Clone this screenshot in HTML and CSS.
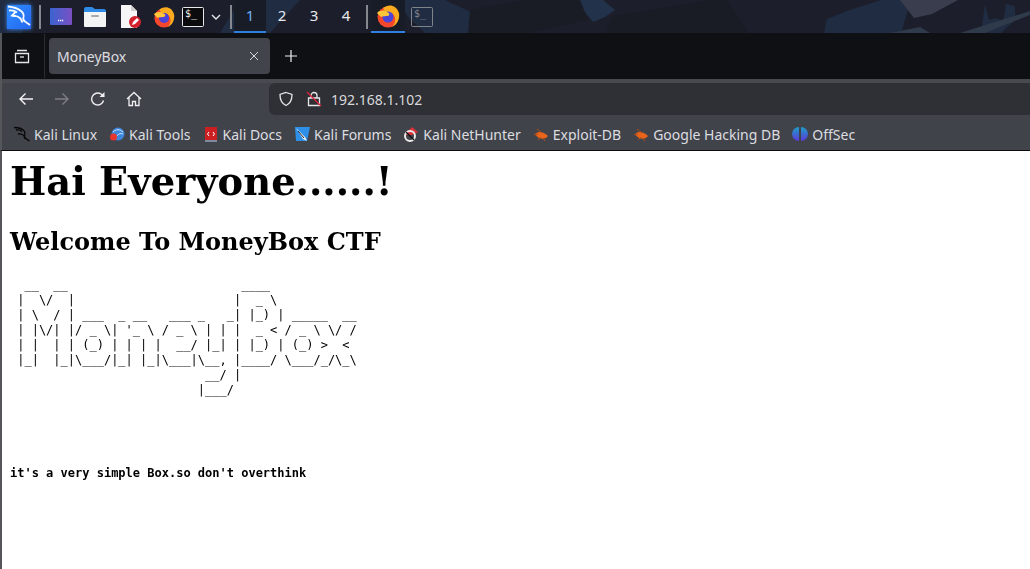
FILE: index.html
```
<!DOCTYPE html>
<html lang="en">
<head>
<meta charset="utf-8">
<title>MoneyBox</title>
<link rel="stylesheet" href="styles.css">
</head>
<body>
<header class="taskbar">
  <svg class="wallpaper" viewBox="0 0 1030 33" preserveAspectRatio="none" aria-hidden="true">
    <path class="wp-blue" d="M0 0h30l-8 33H0zM240 0h60l-30 33h-50zM395 0h50l30 14 10 19h-60l-15-14z"/>
    <path class="wp-line" d="M575 0h28l12 10-10 7-12 5z"/>
    <path class="wp-dark" d="M470 10l55-10h55l8 20-60 13h-60zM612 16l100-16h15l22 33H606z"/>
    <path class="wp-blue" d="M824 33l3-14 20-8 34-11h30l-10 33z"/>
    <path class="wp-light" d="M900 0h58l-26 14-18 4z"/>
    <path class="wp-blue" d="M985 4l4 16 8-2 6 4 3-18 9 2v14l-14 13h-20z"/>
    <path class="wp-line2" d="M960 33l70-22v4l-45 18zM890 33h40l-10-6z"/>
  </svg>
  <div class="launcher">
    <span class="kali-btn"><svg viewBox="0 0 24 24" width="24" height="24"><defs><linearGradient id="kb" x1="0" x2="1" y1="0" y2="1"><stop offset="0" stop-color="#2f8cff"/><stop offset="1" stop-color="#2468ee"/></linearGradient></defs><rect width="24" height="24" fill="url(#kb)"/><path d="M1 1.500c5 .5 10 2 13 4.500 2.500 2 3 4 2.500 6-.5 1.500-1 3 1.500 4.500l5 3.500M2 5.500c3-.5 6 .5 8 2M5 11c3-.5 6 0 8.500 2.500l2 4M8 7.500l-3 3 4 .5" fill="none" stroke="#f4f8ff" stroke-width="1.800"/></svg></span>
    <span class="sep"></span>
    <svg class="app app-desktop" viewBox="0 0 22 17" width="22" height="17"><defs><linearGradient id="dk" x1="0" x2="1"><stop offset="0" stop-color="#3b63d0"/><stop offset="1" stop-color="#7a50c4"/></linearGradient></defs><rect width="22" height="17" rx="1" fill="url(#dk)"/><path d="M8 12.500h6" stroke="#fff" stroke-dasharray="1.200 .8" stroke-width="1.400"/></svg>
    <svg class="app app-folder" viewBox="0 0 22 20" width="22" height="20"><path d="M0 2a2 2 0 0 1 2-2h6l3 2h9a2 2 0 0 1 2 2v4H0z" fill="#2f8be6"/><path d="M0 5h22v14a1 1 0 0 1-1 1H1a1 1 0 0 1-1-1z" fill="#f4f4f4"/><rect x="7" y="8" width="8" height="2" rx="1" fill="#aaa"/></svg>
    <svg class="app app-doc" viewBox="0 0 20 23" width="20" height="23"><path d="M0 0h10l6 6v17H0z" fill="#f6f6f6"/><path d="M10 0l6 6h-6z" fill="#cfcfcf"/><circle cx="14" cy="17" r="6" fill="#d2202c"/><path d="M11 20l1-3 4-4 2 2-4 4z" fill="#fff"/></svg>
    <svg class="app app-fox" viewBox="0 0 24 24" width="22" height="22"><use href="#fox"/></svg>
    <span class="term"><svg viewBox="0 0 22 20" width="22" height="20"><rect x=".5" y=".5" width="21" height="19" rx="1" fill="#0b0b0d" stroke="#e8e8e8"/><text x="3" y="10" class="term-text">$_</text></svg></span>
    <svg class="chev" viewBox="0 0 10 6" width="10" height="6"><path d="M1 1l4 4 4-4" fill="none" stroke="#e4e6ea" stroke-width="1.400"/></svg>
    <span class="sep sep-end"></span>
  </div>
  <nav class="workspaces">
    <span class="ws active">1</span><span class="ws">2</span><span class="ws">3</span><span class="ws">4</span>
  </nav>
  <span class="sep"></span>
  <div class="tasks">
    <span class="task active"><svg viewBox="0 0 24 24" width="24" height="24"><g id="fox"><circle cx="12" cy="13" r="10.500" fill="#f4472c"/><path d="M7 4c5-4 13-4 16 5 1 6-2 12-7 14 4-4 4-10 1-13-2-2-5-2-7-1z" fill="#fbab1e"/><circle cx="12" cy="13" r="5.500" fill="#4a44d8"/><path d="M1 9c3-3 7-3 10-1 3 1 3 3 1 4-5 0-7 1-7 1z" fill="#ffc63a"/></g></svg></span>
    <span class="task"><svg viewBox="0 0 22 20" width="22" height="20"><rect x=".5" y=".5" width="21" height="19" rx="1" fill="none" stroke="#80838a"/><text x="3" y="10" class="term-text dim">$_</text></svg></span>
  </div>
</header>

<section class="tabbar">
  <span class="tab-view"><svg viewBox="0 0 16 16" width="16" height="16"><path d="M3 2.500h10M1.500 5.500h13v9h-13z" fill="none" stroke="#e6e6e8" stroke-width="1.300"/><path d="M6 9h4" stroke="#e6e6e8" stroke-width="1.300"/></svg></span>
  <div class="tab"><span class="tab-title">MoneyBox</span><svg viewBox="0 0 10 10" width="10" height="10"><path d="M1 1l8 8M9 1l-8 8" stroke="#d6d7da" stroke-width="1"/></svg></div>
  <svg class="newtab" viewBox="0 0 12 12" width="12" height="12"><path d="M6 0v12M0 6h12" stroke="#f0f0f2" stroke-width="1.200"/></svg>
</section>

<section class="navbar">
  <svg class="nav" viewBox="0 0 16 16" width="16" height="16"><path d="M15 8H2M7.500 2.500L2 8l5.500 5.500" fill="none" stroke="#f4f4f6" stroke-width="1.400"/></svg>
  <svg class="nav" viewBox="0 0 16 16" width="16" height="16"><path d="M1 8h13M8.500 2.500L14 8l-5.500 5.500" fill="none" stroke="#7d7f84" stroke-width="1.400"/></svg>
  <svg class="nav" viewBox="0 0 16 16" width="16" height="16"><path d="M13.500 9.500A6 6 0 1 1 11 3L14 5.500" fill="none" stroke="#f0f0f2" stroke-width="1.400"/><path d="M14.500 1v5h-5z" fill="#f0f0f2"/></svg>
  <svg class="nav" viewBox="0 0 16 16" width="16" height="16"><path d="M1 8l7-6.500L15 8M3 6.500V14.500h3.500v-4h3v4H13V6.500" fill="none" stroke="#f0f0f2" stroke-width="1.300"/></svg>
  <div class="urlbar">
    <svg viewBox="0 0 16 16" width="16" height="16"><path d="M8 1.500l6 2c0 5-1.500 9-6 11-4.500-2-6-6-6-11z" fill="none" stroke="#e6e6e8" stroke-width="1.300"/></svg>
    <svg class="lock" viewBox="0 0 16 16" width="16" height="16"><path d="M5 7V4.500a3 3 0 0 1 6 0V7M2.500 7h11v7.500h-11z" fill="none" stroke="#e6e6e8" stroke-width="1.300"/><path d="M1 1l14 14" stroke="#e0243c" stroke-width="1.300"/></svg>
    <span class="url">192.168.1.102</span>
  </div>
</section>

<section class="bookmarks">
  <span class="bm"><svg viewBox="0 0 16 16" width="16" height="16"><path d="M0 1.500c5 0 9 1.500 10.500 4 1 2 0 3.500 0 5 0 1.500 2 2.500 5 4.500M2 4c3-.5 5 .5 6 1.500M4 8c2.500-.5 5 0 6 2l1 3" fill="none" stroke="#070707" stroke-width="1.300"/></svg>Kali Linux</span>
  <span class="bm"><svg viewBox="0 0 16 16" width="16" height="16"><circle cx="9" cy="8" r="6.500" fill="#3c86dc"/><path d="M4 6c3-3 7-3 10 0M7 11c2-3 4-4 7-3" fill="none" stroke="#cfe4fb"/><circle cx="4.500" cy="11" r="3.500" fill="#e8352d"/></svg>Kali Tools</span>
  <span class="bm"><svg viewBox="0 0 16 16" width="16" height="16"><path d="M2 1h12v13H2z" fill="#cc1f22"/><path d="M2 14h12v2H2z" fill="#7d8aa0"/><path d="M6 6L4.500 8 6 10M10 6l1.500 2L10 10" fill="none" stroke="#fff"/></svg>Kali Docs</span>
  <span class="bm"><svg viewBox="0 0 16 16" width="16" height="16"><path d="M1 1h15l-3 14H2z" fill="#2e8fe8"/><path d="M2 2l9 9 2 4-4-2z" fill="#f4f4f4"/><path d="M4 5l6 7" stroke="#222"/></svg>Kali Forums</span>
  <span class="bm"><svg viewBox="0 0 16 16" width="16" height="16"><path d="M1 9l8-8 6 5-6 3z" fill="#d7323a"/><circle cx="7" cy="10" r="5" fill="none" stroke="#e9e9e9" stroke-width="2"/><path d="M3 6l8 8" stroke="#111" stroke-width="1.200"/></svg>Kali NetHunter</span>
  <span class="bm"><svg viewBox="0 0 16 16" width="16" height="16"><use href="#bug"/></svg>Exploit-DB</span>
  <span class="bm"><svg viewBox="0 0 16 16" width="16" height="16"><g id="bug"><path d="M2 8c3-3 8-3 13 2-3 4-9 4-13-2z" fill="#e8641a"/><path d="M4 3l5 4M1 9l4-1M5 14l3-3M10 12l2 3" stroke="#b54c14"/></g></svg>Google Hacking DB</span>
  <span class="bm"><svg viewBox="0 0 16 16" width="16" height="16"><defs><linearGradient id="os" x1="0" x2="0" y1="0" y2="1"><stop offset="0" stop-color="#1e9fc8"/><stop offset="1" stop-color="#5a38d8"/></linearGradient></defs><path d="M7 1a7 7 0 0 0 0 14zM9 1a7 7 0 0 1 0 14z" fill="url(#os)"/></svg>OffSec</span>
</section>

<main class="page">
<h1>Hai Everyone......!</h1>
<h2>Welcome To MoneyBox CTF</h2>
<pre class="ascii">  __  __                        ____
 |  \/  |                      |  _ \
 | \  / | ___  _ __   ___ _   _| |_) | _____  __
 | |\/| |/ _ \| '_ \ / _ \ | | |  _ &lt; / _ \ \/ /
 | |  | | (_) | | | |  __/ |_| | |_) | (_) &gt;  &lt;
 |_|  |_|\___/|_| |_|\___|\__, |____/ \___/_/\_\
                           __/ |
                          |___/
</pre>
<p class="note">it's a very simple Box.so don't overthink</p>
</main>
</body>
</html>
```
FILE: styles.css
```
* { box-sizing: border-box; }
html, body { height: 100%; }
body {
  margin: 0;
  display: flex;
  flex-direction: column;
  overflow: hidden;
  background: #fff;
  font-family: "Noto Sans", sans-serif;
}
.taskbar {
  position: relative;
  flex: 0 0 33px;
  display: flex;
  align-items: center;
  background: #1c1f2b;
  overflow: hidden;
}
.wallpaper { position: absolute; inset: 0; width: 100%; height: 100%; }
.wp-blue { fill: #202c42; }
.wp-dark { fill: #1a1c25; }
.wp-light { fill: #393d4e; }
.wp-line { fill: #22324a; }
.wp-line2 { fill: #2f3a4a; }
.launcher, .workspaces, .tasks { position: relative; display: flex; align-items: center; height: 33px; }
.kali-btn { display: flex; margin-left: 7px; box-shadow: 0 0 4px #3b8cff; }
.sep { position: relative; width: 2px; height: 24px; background: #85888f; margin: 0 9px 0 8px; }
.app-desktop { margin-right: 12px; }
.app-folder { margin-right: 15px; }
.app-doc { margin-right: 12px; }
.app-fox { margin-right: 7px; }
.term { display: flex; }
.term-text { font: 10px "DejaVu Sans Mono", monospace; fill: #f0f0f0; }
.term-text.dim { fill: #80838a; }
.chev { margin: 0 9px 0 7px; }
.sep-end { margin: 0 2px 0 0; }
.workspaces { margin-right: -4px; }
.ws {
  width: 32px;
  height: 33px;
  line-height: 30px;
  text-align: center;
  color: #e8eaee;
  font-size: 15px;
}
.ws.active { color: #6fb0f2; background: #181c26; border-bottom: 2px solid #2f7fe0; }
.tasks { margin-left: -6px; }
.task { width: 34px; height: 33px; display: flex; align-items: center; justify-content: center; }
.task + .task { margin-left: 6px; width: 22px; }
.task.active { border-bottom: 2px solid #2f7fe0; background: #181c26; }
.tabbar {
  flex: 0 0 46px;
  display: flex;
  align-items: center;
  background: #0f1014;
  border-left: 2px solid #55565a;
}
.tab-view {
  width: 43px;
  height: 44px;
  display: flex;
  align-items: center;
  justify-content: center;
  border-right: 1px solid #2c2d31;
  padding-right: 3px;
}
.tab {
  margin-left: 4px;
  width: 221px;
  height: 36px;
  border-radius: 4px;
  background: #42444b;
  display: flex;
  align-items: center;
  justify-content: space-between;
  padding: 0 11px 0 8px;
  color: #dcdde0;
  font-size: 14px;
}
.newtab { margin-left: 15px; }
.navbar {
  flex: 0 0 36px;
  display: flex;
  align-items: center;
  background: linear-gradient(#484a50 0 4px, #41434a 4px);
  border-left: 2px solid #55565a;
  padding: 4px 0 0 16px;
  gap: 20px;
}
.urlbar {
  margin-left: 107px;
  flex: 1;
  height: 32px;
  background: #2f3035;
  border-radius: 6px 0 0 6px;
  display: flex;
  align-items: center;
  gap: 12px;
  padding-left: 9px;
  color: #d8d9dc;
  font-size: 14px;
}
.lock { margin-right: -3px; }
.bookmarks {
  flex: 0 0 36px;
  display: flex;
  align-items: center;
  gap: 12px;
  background: #41434a;
  border-left: 2px solid #55565a;
  border-bottom: 1px solid #0c0c0e;
  padding: 3px 0 0 12px;
  color: #dcdde0;
  font-size: 14px;
}
.bm { display: flex; align-items: center; gap: 4px; white-space: nowrap; }
.page {
  flex: 1;
  border-left: 2px solid #55565a;
  padding: 0 8px;
  color: #000;
  font-family: "DejaVu Serif", serif;
  overflow: hidden;
  will-change: transform;
}
h1 { font-size: 38.4px; margin: 9px 0 24px; line-height: 44px; }
h2 { font-size: 24px; margin: 0 0 22px; line-height: 28px; }
.ascii { font: 12px/15px "DejaVu Sans Mono", monospace; margin: 0 0 68px; }
.note { font: bold 12px/15px "DejaVu Sans Mono", monospace; margin: 0; }
```
